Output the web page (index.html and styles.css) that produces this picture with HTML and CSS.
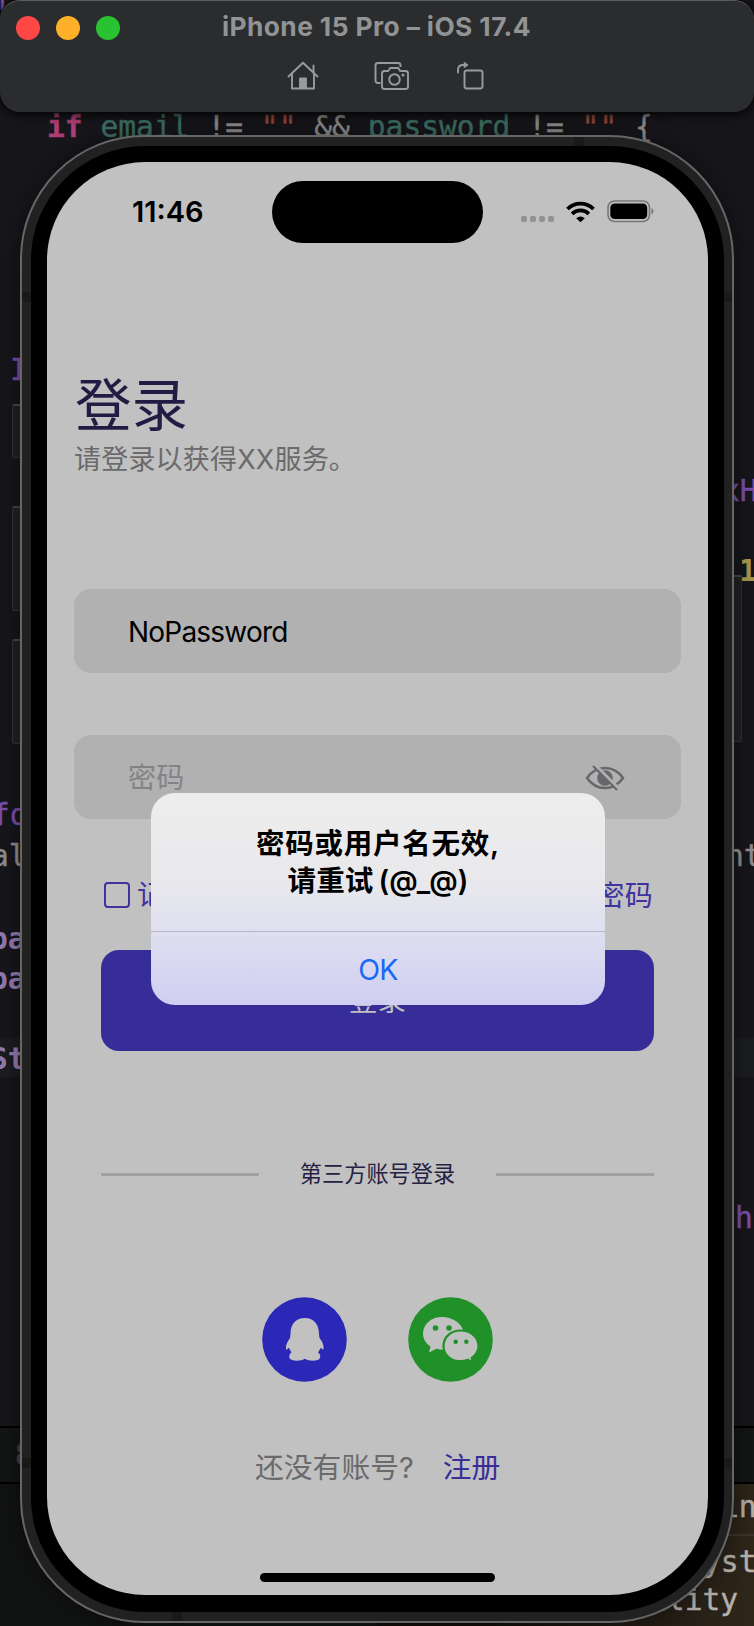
FILE: index.html
```html
<!DOCTYPE html>
<html lang="zh-CN">
<head>
<meta charset="utf-8">
<title>iPhone 15 Pro – iOS 17.4</title>
<link rel="stylesheet" href="styles.css">
</head>
<body>
<div class="desktop">
  <!-- Editor behind the simulator window -->
  <div class="editor">
    <div class="row-highlight"></div>
    <div class="debug-bar"></div>
    <div class="console"></div>
    <div class="warning-pane"></div>
    <pre class="code c-if"><b class="kw">if</b> <span class="id">email</span> != <span class="str">""</span> &amp;&amp; <span class="id">password</span> != <span class="str">""</span> {</pre>
    <pre class="code purple c-f">f</pre>
    <pre class="code purple c-br">I</pre>
    <pre class="code purple c-fo">fo</pre>
    <pre class="code c-al">al</pre>
    <pre class="code lilac c-pa1">pa</pre>
    <pre class="code lilac c-pa2">pa</pre>
    <pre class="code lilac c-st">St</pre>
    <pre class="code purple c-xh">xH</pre>
    <pre class="code yellow c-one">1</pre>
    <pre class="code c-nt">nt</pre>
    <pre class="code purple c-h">h</pre>
    <pre class="code dim c-8">8</pre>
    <pre class="code light c-in">in</pre>
    <pre class="code light c-yst">yst</pre>
    <pre class="code light c-ility">ility</pre>
  </div>

  <header class="titlebar">
    <div class="title-row">
      <div class="lights"><i class="red"></i><i class="amber"></i><i class="green"></i></div>
      <h1 class="window-title">iPhone 15 Pro – iOS 17.4</h1>
    </div>
    <div class="tools">
      <svg width="32" height="30" viewBox="0 0 32 30" fill="none" stroke="#9a9b9c" stroke-width="1.9" stroke-linejoin="round" stroke-linecap="round"><path d="M1.5 15.5 16 1.8 30.500 15.500M5 12.500V27.500H27V12.500M26.500 11V4.500"/><path d="M13 27V17.500H19V27Z" fill="#9a9b9c"/></svg>
      <svg width="36" height="30" viewBox="0 0 36 30" fill="none" stroke="#9a9b9c" stroke-width="1.9" stroke-linejoin="round"><path d="M6.500 22H4Q1.500 22 1.500 19.500V4.500Q1.500 2 4 2H24Q26.500 2 26.500 4.500V6"/><path d="M10.500 10H14.200L16.200 7H24.200L26.200 10H31.500Q34 10 34 12.500V25.500Q34 28 31.500 28H10.500Q8 28 8 25.500V12.500Q8 10 10.500 10Z"/><circle cx="20.500" cy="18.500" r="5.300"/><circle cx="29" cy="14" r=".6" fill="#9a9b9c"/></svg>
      <svg width="30" height="30" viewBox="0 0 30 30" fill="none" stroke="#9a9b9c" stroke-width="1.900" stroke-linejoin="round" stroke-linecap="round"><rect x="8.500" y="9.500" width="18" height="18" rx="2.200"/><path d="M2 11.500V9Q2 4 7 4H9"/><path d="M8.500 1.500 12 4 8.500 6.500Z" fill="#9a9b9c" stroke-width="1"/></svg>
    </div>
  </header>

  <div class="phone">
    <i class="side l1"></i><i class="side l2"></i><i class="side l3"></i><i class="side r1"></i>
    <div class="frame">
      <i class="band b-top"></i><i class="band b-l1"></i><i class="band b-r1"></i><i class="band b-l2"></i><i class="band b-r2"></i><i class="band b-bot"></i>
      <div class="bezel">
        <main class="screen">
          <div class="status">
            <span class="time">11:46</span>
            <span class="island"></span>
            <span class="indicators">
              <span class="dots"><i></i><i></i><i></i><i></i></span>
              <svg class="wifi" width="29" height="22" viewBox="0 0 29 22" fill="none" stroke="#000" stroke-width="3.700"><path d="M1.500 8A18.600 18.600 0 0 1 27.500 8"/><path d="M6.100 12.900A12 12 0 0 1 22.900 12.900"/><path d="M10.200 17.200Q14.500 13.600 18.800 17.200L14.500 21.300Z" fill="#000" stroke="none"/></svg>
              <svg width="47" height="23" viewBox="0 0 47 23"><rect x="1" y="1" width="41.500" height="20.500" rx="6.500" fill="none" stroke="#777" stroke-width="1.600"/><rect x="3.300" y="3.400" width="36.900" height="15.700" rx="4.300"/><path d="M44.500 8Q46.500 9 46.500 11.200T44.500 14.500Z" fill="#777"/></svg>
            </span>
          </div>

          <h2 class="heading">登录</h2>
          <p class="sub">请登录以获得XX服务。</p>

          <div class="field user"><span>NoPassword</span></div>
          <div class="field pass">
            <span>密码</span>
            <svg width="40" height="28" viewBox="0 0 40 28"><path d="M2 14Q9 4 20 4T38 14Q31 24 20 24T2 14Z" fill="none" stroke="#66676b" stroke-width="2.500"/><circle cx="20" cy="14" r="7.800" fill="#66676b"/><path d="M10.500 1.800 34 25" stroke="#b1b1b1" stroke-width="3.500"/><path d="M8 2 32 26" stroke="#66676b" stroke-width="2.200"/></svg>
          </div>

          <div class="options"><span class="remember"><i></i>记住我</span><span>忘记密码</span></div>
          <div class="login"><span>登录</span></div>

          <div class="divider"><i></i><span>第三方账号登录</span><i></i></div>

          <div class="social">
            <svg width="85" height="85" viewBox="0 0 85 85"><circle cx="42.500" cy="42.500" r="42.300" fill="#2b28b7"/><path fill="#c1c1c1" d="M42.800 21C33 21 28.500 28 28.500 37L28 41C25 45 23.500 48.500 24 52.200Q24.800 53.500 26.800 50.800L29.500 55.500Q26.500 57.500 27.500 61C29 64.800 40 64 42.800 61.700C46 64 56.500 64.800 58 61Q59 57.500 56 55.500L58.800 50.800Q61 53.500 61.500 52C62 48.500 60.500 44.500 57.500 41L57 37C57 28 52.500 21 42.800 21Z"/></svg>
            <svg width="85" height="85" viewBox="0 0 85 85"><circle cx="42.500" cy="42.500" r="42.300" fill="#209128"/><path fill="#c1c1c1" d="M34 20C23 20 15 27.500 15 36.500C15 42 18 46.500 22.500 49.500L21 55.500 28.500 51.800Q34 53.500 40 52.500L55 33C52.500 25.500 44 20 34 20Z"/><circle cx="27.500" cy="31" r="2.800" fill="#209128"/><circle cx="41" cy="31" r="2.800" fill="#209128"/><path stroke="#209128" stroke-width="2.200" fill="#c1c1c1" d="M52.500 33.500C43 33.500 35.500 40 35.500 49S43 64.200 52.500 64.200Q56.500 64.200 60 62.800L65 66 63.700 61C68 58 70.500 54 70.500 49C70.500 40 62.500 33.500 52.500 33.500Z"/><circle cx="47.700" cy="44.700" r="2.200" fill="#209128"/><circle cx="58.300" cy="44.700" r="2.200" fill="#209128"/></svg>
          </div>

          <div class="signup"><span>还没有账号?</span><a>注册</a></div>
          <i class="home-indicator"></i>

          <div class="alert" role="alertdialog">
            <div class="alert-text"><p class="a1">密码或用户名无效,</p><p class="a2">请重试 (@_@)</p></div>
            <div class="alert-ok"><span>OK</span></div>
          </div>
        </main>
      </div>
    </div>
  </div>
</div>
</body>
</html>
```

FILE: styles.css
```css
* { box-sizing: border-box; margin: 0; padding: 0; }
i { font-style: normal; }
body { background: #17161b; }

.desktop {
  position: relative;
  width: 754px;
  height: 1626px;
  overflow: hidden;
  background: #17161b;
  font-family: Inter, "Noto Sans CJK SC", sans-serif;
}

/* Editor fragments */
.editor { position: absolute; inset: 0; }
.row-highlight { position: absolute; top: 1038px; left: 0; width: 100%; height: 39px; background: #1b1d21; }
.debug-bar { position: absolute; top: 1426px; left: 0; width: 100%; height: 58px; background: #131615; border: 2px solid #000; border-width: 2px 0; }
.console { position: absolute; top: 1484px; left: 0; width: 377px; height: 142px; background: #111312; }
.warning-pane { position: absolute; top: 1484px; left: 377px; width: 377px; height: 142px; background: linear-gradient(to right, #0f0e0c 30%, #2f261a); }
.warning-pane::after { content: ""; position: absolute; left: 0; right: 0; top: 50px; height: 2px; background: #3a342c; }
.code { position: absolute; font: 29.6px/36px "DejaVu Sans Mono", monospace; color: #909090; white-space: pre; -webkit-text-stroke: .4px currentColor; }
.kw { color: #b03f72; }
.id { color: #3e7266; }
.str { color: #9c4a3d; }
.code.purple { color: #7d4fab; }
.code.lilac { color: #957cb2; font-weight: bold; -webkit-text-stroke: 0; }
.code.yellow { color: #a89a4d; font-weight: bold; -webkit-text-stroke: 0; }
.code.dim { color: #444; }
.code.light { color: #b3b1ac; }
.c-if { left: 47px; top: 109px; }
.c-f { left: -6px; top: -18px; }
.c-br { left: 10px; top: 352px; }
.c-fo { left: -8px; top: 797px; }
.c-al { left: -9px; top: 838px; }
.c-pa1 { left: -10px; top: 921px; }
.c-pa2 { left: -10px; top: 961px; }
.c-st { left: -10px; top: 1041px; }
.c-xh { left: 722px; top: 473px; }
.c-one { left: 739px; top: 553px; }
.c-nt { left: 726px; top: 838px; }
.c-h { left: 735px; top: 1200px; }
.c-8 { left: 15px; top: 1437px; }
.c-in { left: 721px; top: 1489px; }
.c-yst { left: 703px; top: 1544px; }
.c-ility { left: 649px; top: 1582px; }

/* Simulator window title bar */
.titlebar {
  position: relative;
  height: 112px;
  border-radius: 20px;
  background: #2b2c2e;
  border-top: 1px solid #5b5c5d;
  box-shadow: 0 0 0 1px #09090a, 0 2px 12px #000;
}
.title-row { display: flex; height: 54px; align-items: center; padding-left: 16px; }
.lights { display: flex; gap: 16px; }
.lights i { width: 24px; height: 24px; border-radius: 50%; }
.red { background: #ff4845; }
.amber { background: #ffb029; }
.green { background: #29c231; }
.window-title { margin: -2px 0 0 102px; color: #929394; font-size: 26.3px; font-weight: 700; line-height: 34px; letter-spacing: .42px; white-space: nowrap; }
.tools { display: flex; padding: 6px 0 0 287px; }
.tools svg:nth-child(2) { margin-left: 55px; }
.tools svg:nth-child(3) { margin-left: 46px; }

/* Device */
.phone { position: relative; width: 714px; height: 1488px; margin: 23px 0 0 20px; }
.frame {
  position: relative;
  height: 100%;
  padding: 9px 8px 9px 9px;
  border: 2px solid #666;
  border-radius: 124px;
  background: #212121;
  box-shadow: 0 0 24px 2px rgba(0, 0, 0, .4);
}
.band { position: absolute; background: #191919; }
.b-top { left: 552px; top: 0; width: 10px; height: 9px; }
.b-bot { left: 150px; bottom: 0; width: 10px; height: 9px; }
.b-l1, .b-r1 { top: 155px; width: 9px; height: 10px; }
.b-l2, .b-r2 { top: 1321px; width: 9px; height: 10px; }
.b-l1, .b-l2 { left: 0; }
.b-r1, .b-r2 { right: 0; }
.side { position: absolute; background: #222; border: 1px solid #333; border-top: 2px solid #484848; border-radius: 2px; width: 12px; }
.l1 { left: -8px; top: 269px; height: 54px; }
.l2 { left: -8px; top: 371px; height: 105px; }
.l3 { left: -8px; top: 504px; height: 105px; }
.r1 { right: -8px; top: 440px; height: 167px; }
.bezel { position: relative; height: 100%; padding: 16px; border-radius: 114px; background: #000; }
.screen {
  position: relative;
  display: flex;
  flex-direction: column;
  height: 1433px;
  border-radius: 98px;
  background: #c1c1c1;
  overflow: hidden;
}

.status { display: flex; align-items: center; height: 62px; margin-top: 19px; padding-left: 85px; }
.time { width: 140px; font-size: 29px; font-weight: 600; line-height: 36px; padding-bottom: 1px; }
.island { width: 211px; height: 62px; border-radius: 31px; background: #000; }
.indicators { display: flex; align-items: center; margin-left: 38px; margin-top: -1px; }
.dots { display: flex; gap: 3px; margin-top: 14px; }
.dots i { width: 6px; height: 6px; border-radius: 2px; background: #929292; }
.wifi { margin: 0 12px 0 12px; }

.heading { margin: 118px 0 0 28px; font-size: 56.5px; font-weight: 400; line-height: 80px; color: #211c43; font-family: "Noto Sans CJK SC", sans-serif; }
.sub { margin: 2px 0 0 27px; height: 34px; line-height: 34px; font-size: 27px; letter-spacing: .2px; color: #6a6a6c; }

.field { display: flex; align-items: center; height: 84px; margin: 0 27px; padding: 2px 56px 0 54px; border-radius: 17px; background: #b1b1b1; font-size: 28px; line-height: 40px; }
.user { margin-top: 112px; letter-spacing: -.78px; }
.pass { margin-top: 62px; justify-content: space-between; color: #838387; letter-spacing: .3px; }

.options { display: flex; justify-content: space-between; height: 40px; line-height: 42px; margin: 56px 55px 0 57px; font-size: 28px; color: #4033a0; letter-spacing: .3px; }
.remember { display: flex; align-items: center; }
.remember i { width: 26px; height: 26px; border: 2px solid #4033a0; border-radius: 4px; margin-right: 7px; }
.login { display: flex; justify-content: center; height: 101px; margin: 35px 54px 0; padding-top: 31px; border-radius: 18px; background: #372d99; color: #c1c1c1; font-size: 28.500px; line-height: 40px; }

.divider { display: flex; align-items: center; justify-content: space-between; height: 32px; margin: 107px 54px 0; color: #252143; font-size: 22.200px; line-height: 32px; }
.divider i { width: 158px; height: 3px; background: #a1a1a2; }
.social { display: flex; gap: 61px; margin: 107px 0 0 215px; }
.signup { display: flex; gap: 29px; height: 42px; margin: 65px 0 0 208px; font-size: 28.800px; line-height: 42px; color: #6a6a6c; }
.signup a { color: #392e99; }
.home-indicator { width: 235px; height: 9px; border-radius: 5px; background: #000; margin: 84px 0 0 213px; }

/* System alert floating over the login form */
.alert {
  position: absolute;
  left: 104px;
  top: 631px;
  width: 454px;
  height: 212px;
  border-radius: 24px;
  background: linear-gradient(#ededed 0%, #e9e9ec 40%, #dfdff0 65%, #cfcef2 100%);
}
.alert-text { height: 139px; padding-top: 32px; border-bottom: 1px solid #b7b8cb; text-align: center; font-size: 28.500px; font-weight: 600; line-height: 37px; }
.a1 { letter-spacing: .75px; }
.a2 { letter-spacing: .1px; word-spacing: -2px; }
.alert-ok { height: 73px; line-height: 76px; text-align: center; font-size: 28.500px; color: #1769f5; letter-spacing: -.7px; }
```
